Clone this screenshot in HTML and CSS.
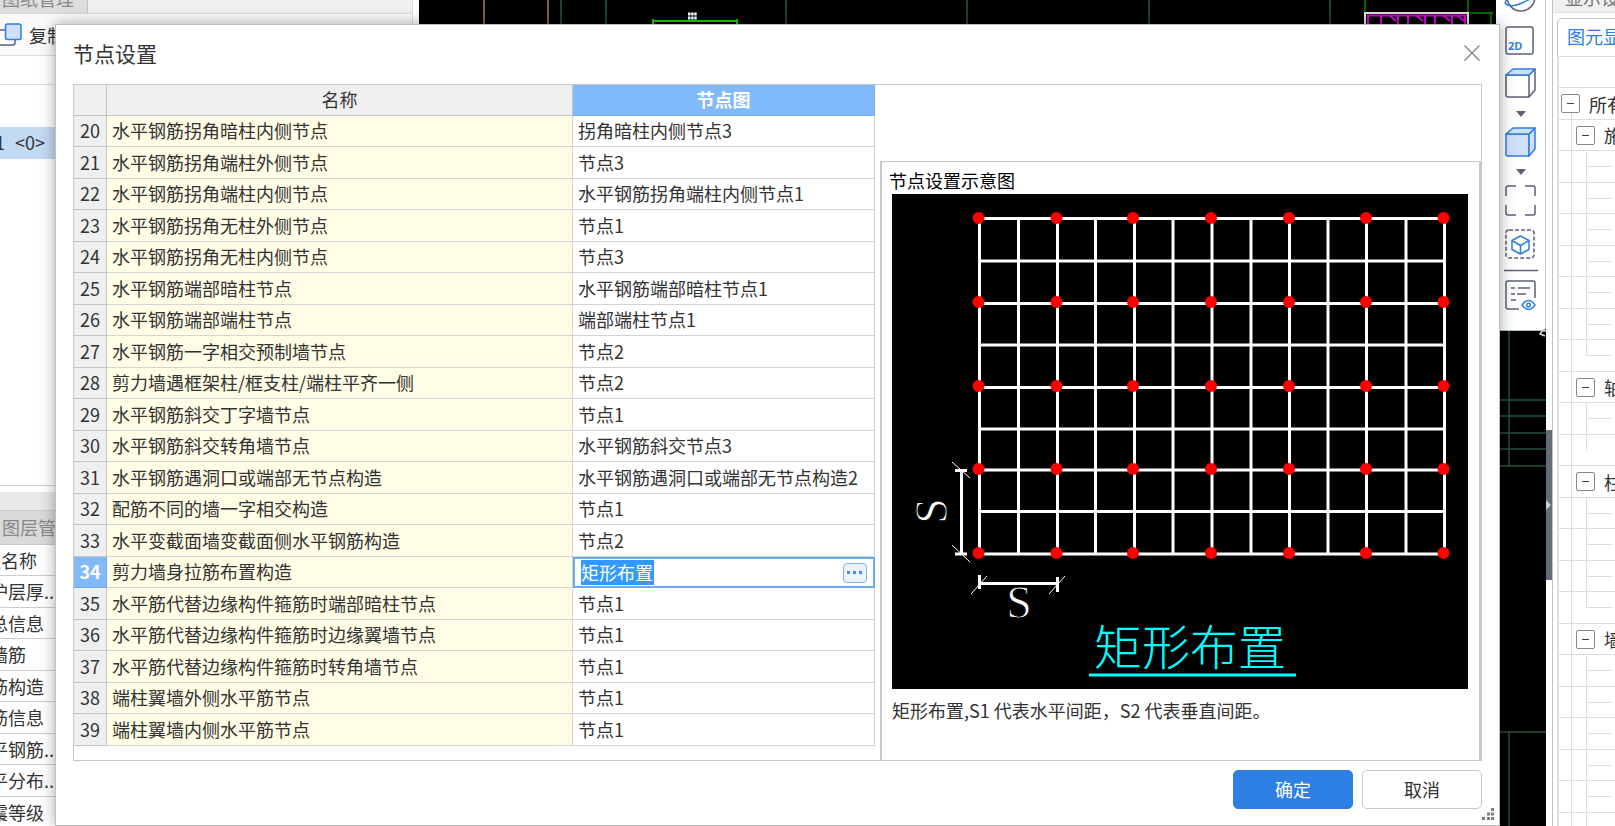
FILE: index.html
```html
<!DOCTYPE html>
<html lang="zh-CN">
<head>
<meta charset="utf-8">
<title>节点设置</title>
<link rel="stylesheet" href="styles.css">
</head>
<body>
<div class="workspace">
  <aside class="left-panel">
    <div class="top-tabs"><span class="top-tab">图纸管理</span></div>
    <div class="tools">
      <button class="copy-btn" type="button">
        <svg width="22" height="24" viewBox="0 0 22 24" fill="none" stroke-width="1.5"><rect x="-4" y="7" width="19" height="15" rx="2" stroke="#5a6275" fill="#fff"/><rect x="5.500" y="1" width="15.500" height="15.500" rx="2" stroke="#2d7fe0" fill="#cfe1fa"/></svg>
        <span>复制</span>
      </button>
    </div>
    <div class="search-row"></div>
    <div class="drawing-list"><div class="drawing-item"><span>1</span><span>&lt;0&gt;</span></div></div>
    <div class="splitter"></div>
    <div class="layer-tab">图层管理</div>
    <div class="props">
      <div class="prop prop-head">性名称</div>
      <div class="prop">护层厚...</div>
      <div class="prop">总信息</div>
      <div class="prop">墙筋</div>
      <div class="prop">筋构造</div>
      <div class="prop">筋信息</div>
      <div class="prop">平钢筋...</div>
      <div class="prop">平分布...</div>
      <div class="prop">震等级</div>
    </div>
  </aside>

  <main class="canvas">
    <svg class="drawing" viewBox="0 0 1127 826" preserveAspectRatio="xMaxYMin slice" fill="none">
      <path d="M65 0V30M129 0V30" stroke="#7d6431" stroke-width="2"/>
      <path d="M142 0V30M187 0V30M367 0V30M548 0V30M730 0V30M911 0V30" stroke="#2a5548" stroke-width="1.500"/>
      <path d="M234 25V21H318V25M234 19V23M318 19V23" stroke="#00d800" stroke-width="2"/>
      <path d="M269 14h9M269 18h9" stroke="#fff" stroke-width="3" stroke-dasharray="2.500 .6"/>
      <path d="M946 0V13M1049 0V13M1051 13H1074M1072 13V24" stroke="#00c800"/>
      <path d="M946 30V13H1049V30" stroke="#ddd" stroke-width="2"/>
      <path d="M948 15.500H1048M949 15V30M962 15V30M979 15V30M989 15V30M1006 15V30M1016 15V30M1033 15V30M1046 15V30M971 16l6 5M998 16l6 5M1025 16l6 5M1039 16l6 5" stroke="#d800d8" stroke-width="2"/>
      <path d="M1090 330V466M1079 400H1127M1079 416H1127M1079 433H1127M1079 449H1127M1079 466H1127M1079 732H1127M1090 732V826" stroke="#235045" stroke-width="1.500"/>
      <path d="M1127 331h-4l-2 3 5 2" stroke="#ddd" stroke-width="1.500"/>
    </svg>
    <nav class="view-bar">
      <svg width="49" height="330" viewBox="0 0 49 330" fill="none" stroke="#5a6275" stroke-width="1.500" stroke-linejoin="round">
        <circle cx="25" cy="-3" r="14"/><path d="M9 3Q14 10 34 -1M9 3L12 -4" stroke="#2d7fe0"/>
        <rect x="10" y="27" width="27" height="27" rx="2"/>
        <path d="M10 75h23v22H12q-2 0-2-2zM33 75l6-6v21l-6 7"/><path d="M10 75l7-6h22l-6 6z" fill="#cfe1fa" stroke="#2d7fe0"/>
        <path d="M20 111h10l-5 6z" fill="#5a6275" stroke="none"/>
        <g fill="#cfe1fa" stroke="#2d7fe0"><path d="M10 134h23v22H12q-2 0-2-2z"/><path d="M33 134l6-6v21l-6 7z"/><path d="M10 134l7-6h22l-6 6z"/></g>
        <path d="M20 169h10l-5 6z" fill="#5a6275" stroke="none"/>
        <path d="M10 196v-8q0-2 2-2h8M29 186h8q2 0 2 2v8M39 205v8q0 2-2 2h-8M20 215h-8q-2 0-2-2v-8"/>
        <rect x="10" y="230" width="28" height="28" rx="3" stroke-dasharray="4 2"/>
        <path d="M24.500 236l8.500 4.500v9l-8.500 4.500-8.500-4.500v-9zM16 240.500l8.500 5 8.500-5M24.500 245.500v8.500" stroke="#2d7fe0"/>
        <path d="M8 270.500h34"/>
        <path d="M23 309H12q-2 0-2-2v-24q0-2 2-2h25q2 0 2 2v15M15 288h4M22 288h12M15 294h4M21 294h9M15 300h5"/>
        <path d="M26 305q6.500-9 13 0q-6.500 9-13 0z" fill="#fff" stroke="#2d7fe0"/><circle cx="32.500" cy="305" r="1.800" stroke="#2d7fe0"/>
        <text class="two-d" x="12" y="50">2D</text>
      </svg>
    </nav>
  </main>

  <div class="gutter"><span class="handle"></span></div>

  <aside class="right-panel">
    <div class="right-title">显示设置</div>
    <div class="right-tabs"><span class="right-tab">图元显示</span></div>
    <div class="tree">
      <div class="tree-head"></div>
      <div class="node root"><button class="toggle" type="button" aria-label="折叠"></button>所有</div>
      <div class="node group"><button class="toggle" type="button" aria-label="折叠"></button>施</div>
      <div class="node leaf"></div><div class="node leaf"></div><div class="node leaf"></div><div class="node leaf"></div><div class="node leaf"></div><div class="node leaf"></div><div class="node leaf last"></div>
      <div class="node group"><button class="toggle" type="button" aria-label="折叠"></button>轴</div>
      <div class="node leaf"></div><div class="node leaf last"></div>
      <div class="node group"><button class="toggle" type="button" aria-label="折叠"></button>柱</div>
      <div class="node leaf"></div><div class="node leaf"></div><div class="node leaf"></div><div class="node leaf last"></div>
      <div class="node group"><button class="toggle" type="button" aria-label="折叠"></button>墙</div>
      <div class="node leaf"></div><div class="node leaf"></div><div class="node leaf"></div><div class="node leaf"></div><div class="node leaf"></div><div class="node leaf"></div>
    </div>
  </aside>
</div>

<section class="dialog" role="dialog" aria-labelledby="dialog-title">
  <header class="dialog-head">
    <h1 id="dialog-title">节点设置</h1>
    <button class="close" type="button" aria-label="关闭"><svg width="18" height="18" viewBox="0 0 18 18"><path d="M1.500 1.500l15 15M16.500 1.500l-15 15" stroke="#8c8c8c" stroke-width="1.500"/></svg></button>
  </header>
  <div class="content">
    <table class="nodes">
      <colgroup><col class="c-num"><col><col class="c-pic"></colgroup>
      <thead><tr><th></th><th>名称</th><th class="active">节点图</th></tr></thead>
      <tbody>
        <tr><th>20</th><td>水平钢筋拐角暗柱内侧节点</td><td>拐角暗柱内侧节点3</td></tr>
        <tr><th>21</th><td>水平钢筋拐角端柱外侧节点</td><td>节点3</td></tr>
        <tr><th>22</th><td>水平钢筋拐角端柱内侧节点</td><td>水平钢筋拐角端柱内侧节点1</td></tr>
        <tr><th>23</th><td>水平钢筋拐角无柱外侧节点</td><td>节点1</td></tr>
        <tr><th>24</th><td>水平钢筋拐角无柱内侧节点</td><td>节点3</td></tr>
        <tr><th>25</th><td>水平钢筋端部暗柱节点</td><td>水平钢筋端部暗柱节点1</td></tr>
        <tr><th>26</th><td>水平钢筋端部端柱节点</td><td>端部端柱节点1</td></tr>
        <tr><th>27</th><td>水平钢筋一字相交预制墙节点</td><td>节点2</td></tr>
        <tr><th>28</th><td>剪力墙遇框架柱/框支柱/端柱平齐一侧</td><td>节点2</td></tr>
        <tr><th>29</th><td>水平钢筋斜交丁字墙节点</td><td>节点1</td></tr>
        <tr><th>30</th><td>水平钢筋斜交转角墙节点</td><td>水平钢筋斜交节点3</td></tr>
        <tr><th>31</th><td>水平钢筋遇洞口或端部无节点构造</td><td>水平钢筋遇洞口或端部无节点构造2</td></tr>
        <tr><th>32</th><td>配筋不同的墙一字相交构造</td><td>节点1</td></tr>
        <tr><th>33</th><td>水平变截面墙变截面侧水平钢筋构造</td><td>节点2</td></tr>
        <tr><th class="active">34</th><td>剪力墙身拉筋布置构造</td><td class="editing"><div class="editor"><input type="text" value="矩形布置" aria-label="节点图"><button type="button" aria-label="更多"><svg width="18" height="4" viewBox="0 0 18 4" fill="#3f8de8"><rect x="1" width="3" height="3"/><rect x="7" width="3" height="3"/><rect x="13" width="3" height="3"/></svg></button></div></td></tr>
        <tr><th>35</th><td>水平筋代替边缘构件箍筋时端部暗柱节点</td><td>节点1</td></tr>
        <tr><th>36</th><td>水平筋代替边缘构件箍筋时边缘翼墙节点</td><td>节点1</td></tr>
        <tr><th>37</th><td>水平筋代替边缘构件箍筋时转角墙节点</td><td>节点1</td></tr>
        <tr><th>38</th><td>端柱翼墙外侧水平筋节点</td><td>节点1</td></tr>
        <tr><th>39</th><td>端柱翼墙内侧水平筋节点</td><td>节点1</td></tr>
      </tbody>
    </table>
    <div class="preview">
      <h2>节点设置示意图</h2>
      <svg class="diagram" viewBox="0 0 576 495" fill="none" stroke="#fff">
        <rect width="576" height="495" fill="#000" stroke="none"/>
        <path stroke-width="3" stroke-linecap="square" d="M87.500 24.500H552.500M87.500 67H552.500M87.500 109.500H552.500M87.500 151H552.500M87.500 193.500H552.500M87.500 235H552.500M87.500 276H552.500M87.500 317.500H552.500M87.500 360H552.500M87.500 24.500V360M126.500 24.500V360M165.500 24.500V360M203.500 24.500V360M242.500 24.500V360M281 24.500V360M320 24.500V360M359 24.500V360M397.500 24.500V360M436 24.500V360M474.500 24.500V360M514 24.500V360M552.500 24.500V360"/>
        <path stroke-width="3" d="M69.500 276V360M63 276.500H75M63 360H75M87.500 389.500H165.500M87.500 381V395M165.500 383V398"/>
        <path stroke-width="1" d="M60 268L78 284M60 351L78 368M79 400L95 382M157 400L173 382"/>
        <path stroke="#f00" stroke-width="12" stroke-linecap="round" d="M86.500 24h0M164.500 24h0M241 24h0M319 24h0M397 24h0M474 24h0M551.500 24h0M86.500 108h0M164.500 108h0M241 108h0M319 108h0M397 108h0M474 108h0M551.500 108h0M86.500 192h0M164.500 192h0M241 192h0M319 192h0M397 192h0M474 192h0M551.500 192h0M86.500 275h0M164.500 275h0M241 275h0M319 275h0M397 275h0M474 275h0M551.500 275h0M86.500 359h0M164.500 359h0M241 359h0M319 359h0M397 359h0M474 359h0M551.500 359h0"/>
        <text class="dim" x="127" y="424">S</text>
        <text class="dim" transform="translate(55 317) rotate(-90)">S</text>
        <text class="caption" x="202" y="471">矩形布置</text>
        <path d="M197 481H404" stroke="#0ff" stroke-width="3"/>
      </svg>
      <p>矩形布置,S1 代表水平间距，S2 代表垂直间距。</p>
    </div>
  </div>
  <footer class="actions">
    <button class="btn primary" type="button">确定</button>
    <button class="btn" type="button">取消</button>
  </footer>
  <svg class="grip" width="13" height="13" viewBox="0 0 13 13" fill="#7d7d88"><path d="M9 0h3v3h-3zM5 4.500h3v3h-3zM9 4.500h3v3h-3zM0 9h3v3H0zM5 9h3v3h-3zM9 9h3v3h-3z"/></svg>
</section>
</body>
</html>
```
FILE: styles.css
```css
* { box-sizing: border-box; }

body {
  margin: 0;
  height: 100vh;
  overflow: hidden;
  position: relative;
  font: 18px/24px "Noto Sans CJK SC", sans-serif;
  color: #333;
  background: #fff;
}

button, input { font: inherit; color: inherit; }

.workspace {
  display: grid;
  grid-template-columns: 413px minmax(0, 1fr) 6px 63px;
  height: 100%;
}

/* left panel */
.left-panel {
  display: flex;
  flex-direction: column;
  overflow: hidden;
  white-space: nowrap;
  border-right: 1px solid #ddd;
}
.top-tabs {
  display: flex;
  align-items: flex-end;
  height: 14px;
  flex: none;
  overflow: hidden;
  background: #f0f0f0;
  border-bottom: 1px solid #d8d8d8;
}
.top-tab {
  width: 88px;
  padding: 0 0 3px 2px;
  color: #888;
  background: #dedede;
  border-right: 1px solid #c4c4c4;
}
.tools { height: 42px; flex: none; border-bottom: 1px solid #ddd; background: #fafafa; }
.copy-btn {
  display: flex;
  gap: 7px;
  padding: 9px 0 0;
  border: 0;
  background: none;
}
.search-row { height: 29px; flex: none; border-bottom: 1px solid #ddd; }
.drawing-list { flex: 1; padding-top: 42px; border-bottom: 1px solid #ccc; }
.drawing-item {
  display: flex;
  gap: 10px;
  height: 32px;
  margin-left: -5px;
  line-height: 31px;
  background: #c3daf3;
}
.splitter { height: 25px; flex: none; border-top: 6px solid #fff; border-bottom: 1px solid #ccc; background: #e8e8e8; }
.layer-tab { flex: none; height: 34px; padding: 4px 2px; color: #888; background: #dadada; border-bottom: 1px solid #c8c8c8; }
.props { flex: none; height: 281px; overflow: hidden; }
.prop {
  height: 32px;
  line-height: 31px;
  text-indent: -10px;
  border-bottom: 1px solid #ccc;
}
.prop:nth-child(odd) { height: 31px; }
.prop-head { text-indent: -17px; }

/* drawing area */
.canvas { position: relative; background: #000; border-left: 6px solid #fff; overflow: hidden; }
.drawing { display: block; width: 100%; height: 100%; }
.view-bar {
  position: absolute;
  top: 0;
  right: 0;
  height: 331px;
  background: #fff;
  border-right: 1px solid #ccc;
  border-bottom: 1px solid #bbb;
  border-radius: 0 0 4px 0;
}
.two-d { font: bold 11px "Open Sans", sans-serif; fill: #2d7fe0; stroke: none; }

.gutter { display: flex; align-items: center; background: #fff; }
.handle {
  display: flex;
  align-items: center;
  width: 6px;
  height: 150px;
  margin-top: 184px;
  background: #626d79;
}
.handle::before {
  content: "";
  border: 5px solid transparent;
  border-left-color: #ccc;
  border-right-width: 0;
}

/* right panel */
.right-panel { overflow: hidden; white-space: nowrap; border-left: 1px solid #c4c4cc; }
.right-title {
  display: flex;
  align-items: flex-end;
  height: 13px;
  overflow: hidden;
  padding: 0 0 3px 12px;
  color: #777;
  background: #f0f0f0;
  border-bottom: 1px solid #ddd;
}
.right-tabs { display: flex; padding: 5px 0 0 4px; }
.right-tab {
  height: 38px;
  padding: 5px 9px;
  color: #2d7fe0;
  border: 1px solid #c4c4cc;
  border-width: 1px 0 0 1px;
  border-radius: 5px 0 0 0;
}
.tree { margin-left: 4px; border-left: 2px solid #ddd; border-top: 1px solid #ddd; }
.tree-head { height: 31px; border-bottom: 1px solid #ddd; }
.node {
  position: relative;
  display: flex;
  align-items: center;
  gap: 9px;
  height: 32px;
  padding-left: 17px;
  border-bottom: 1px solid #ddd;
}
.node:nth-child(odd) { height: 31px; }
.root { padding-left: 2px; }
.node::before {
  content: "";
  position: absolute;
  left: 12px;
  top: 0;
  bottom: -1px;
  border-left: 1px solid #ddd;
}
.root::before { top: 25px; }
.toggle {
  position: relative;
  flex: none;
  width: 19px;
  height: 19px;
  padding: 0;
  border: 1px solid #888;
  border-radius: 2px;
  background: #fff;
}
.toggle::before {
  content: "";
  position: absolute;
  left: 5px;
  right: 5px;
  top: 8px;
  border-top: 1px solid #444;
}
.leaf::after {
  content: "";
  position: absolute;
  left: 27px;
  top: 0;
  bottom: 0;
  width: 25px;
  border-left: 1px solid #ddd;
  background: linear-gradient(#ddd, #ddd) 0 15px / 100% 1px no-repeat;
}
.leaf.last::after { bottom: 15px; }

/* dialog */
.dialog {
  position: absolute;
  left: 55px;
  right: 115px;
  top: 24px;
  bottom: 0;
  display: flex;
  flex-direction: column;
  padding: 0 17px;
  background: #fff;
  border: 1px solid #c0c0c0;
  box-shadow: 0 0 14px rgba(0, 0, 0, 0.35);
}
.dialog-head { display: flex; justify-content: space-between; align-items: center; height: 59px; padding-bottom: 4px; flex: none; }
h1 { margin: 0; font-size: 21px; line-height: 28px; font-weight: 400; }
.close { display: flex; padding: 0; margin-right: 1px; border: 0; background: none; }
.content {
  display: flex;
  justify-content: space-between;
  gap: 5px;
  flex: 1;
  min-height: 0;
  border: 1px solid #c8c8c8;
}
.nodes {
  flex: 1;
  align-self: flex-start;
  table-layout: fixed;
  border-spacing: 0;
  white-space: nowrap;
}
.c-num { width: 33px; }
.c-pic { width: 302px; }
.nodes th, .nodes td {
  height: 32px;
  padding: 0 5px 2px;
  text-align: left;
  border: 1px solid #d4d4d4;
  border-width: 0 1px 1px 0;
}
.nodes tr:nth-child(odd) > * { height: 31px; }
.nodes th { padding: 0 0 2px; font-weight: 400; text-align: center; background: #efefef; border-color: #c4c4c4; }
.nodes td:nth-child(2) { background: #fffde6; }
.nodes th.active { color: #fff; font-weight: 700; background: #80bafa; border-color: #6caae9; }
.nodes td.editing { padding: 0; border: 0; }
.editor {
  display: flex;
  align-items: center;
  justify-content: space-between;
  height: 31px;
  padding: 0 6px;
  border: 2px solid #6caae9;
}
.editor input {
  width: 73px;
  height: 25px;
  padding: 0 0 2px;
  border: 0;
  color: #fff;
  background: #3399ff;
}
.editor button {
  display: flex;
  align-items: center;
  justify-content: center;
  width: 24px;
  height: 20px;
  padding: 0;
  border: 1px solid #7ab2ee;
  border-radius: 4px;
  background: #eef2fb;
}
.preview {
  flex: none;
  width: 601px;
  margin-top: 76px;
  padding: 6px 11px 0 10px;
  border: 1px solid #c8c8c8;
  border-width: 1px 2px 0 2px;
}
.preview h2 { margin: 0 0 2px -3px; font-size: 18px; line-height: 24px; font-weight: 400; color: #000; }
.diagram { display: block; width: 100%; }
.preview p { margin: 9px 0 0; }
.dim { font: 46px "Liberation Serif", serif; fill: #fff; stroke: #000; stroke-width: 1px; text-anchor: middle; }
.caption { font: 300 48px "Noto Sans CJK SC", sans-serif; fill: #0ff; stroke: none; }
.actions { display: flex; justify-content: flex-end; gap: 9px; padding: 9px 0 16px; }
.btn { width: 120px; height: 39px; padding: 0 0 2px; border: 1px solid #c8c8c8; border-radius: 5px; background: #fff; }
.primary { color: #fff; background: #2d7fe3; border-color: #2d7fe3; }
.grip { position: absolute; right: 4px; bottom: 4px; }
```
